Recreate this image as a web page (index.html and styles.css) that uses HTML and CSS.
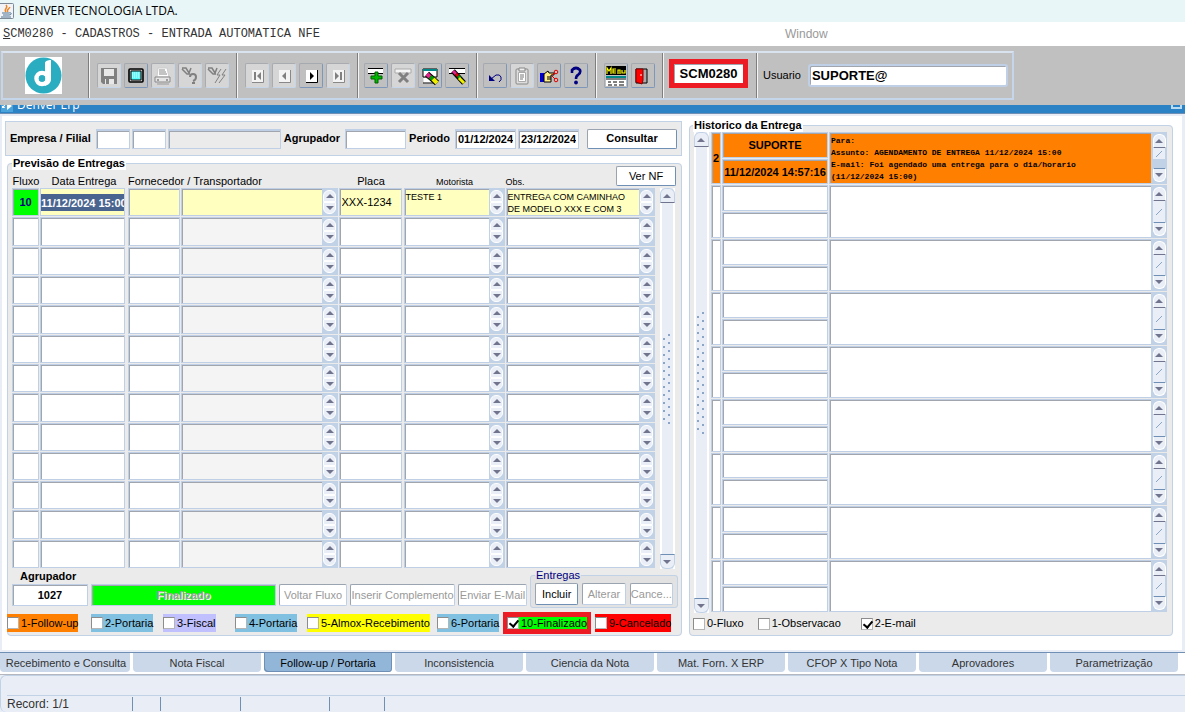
FILE: index.html
```
<!DOCTYPE html>
<html lang="pt-BR">
  <head>
    <meta charset="UTF-8" />
    <title>DENVER TECNOLOGIA LTDA.</title>
    <link rel="stylesheet" href="styles.css">
  </head>
  <body>
    <header class="titlebar">
      <svg class="java" width="14" height="16" viewBox="0 0 14 16">
        <rect x="-2" y="0.5" width="15.5" height="15" rx="1" fill="#f1f3f6" stroke="#7d8997" />
        <path d="M6 9C3 6 9 5 6 2M8 9C6 7 9 6 10 4" fill="none" stroke="#ee8322" stroke-width="1.4" />
        <path d="M2 10h7M3 12h6M1 14h10M9 10c3-1 3 2 0 2" fill="none" stroke="#4f7595" />
      </svg>
      <span>DENVER TECNOLOGIA LTDA.</span>
    </header>

    <nav class="menubar">
      <a href="#" class="menu-program"><u>S</u>CM0280 - CADASTROS - ENTRADA AUTOMATICA NFE</a>
      <a href="#" class="menu-window">Window</a>
    </nav>

    <div class="toolbar-area">
      <div class="toolbar">
        <div class="logo">
          <svg width="37" height="37" viewBox="0 0 37 37">
            <rect width="37" height="37" fill="#fff" />
            <circle cx="18.5" cy="18.5" r="18" fill="#2badc1" />
            <circle cx="17" cy="21.5" r="5.5" fill="none" stroke="#fff" stroke-width="4.5" />
            <path d="M20 6C20 4 23 3 26 3V22C26 26 23 28 20 29Z" fill="#fff" />
            <circle cx="17" cy="21.5" r="3.2" fill="#2badc1" />
          </svg>
        </div>

        <div class="group wide">
          <button class="tool off" aria-label="Salvar">
            <svg viewBox="0 0 20 20"><path d="M2 2h16v16H4l-2-2z" fill="#808080" /><path d="M5 3h10v7H5zM6 13h9v5H6z" fill="#e8e8e8" /><path d="M7 13h3v5H7z" fill="#808080" /></svg>
          </button>
          <button class="tool" aria-label="Tela">
            <svg viewBox="0 0 20 20"><rect x="3" y="3" width="14" height="13" rx="1" fill="#c0c0c0" stroke="#000" stroke-width="1.6" /><path d="M5 5h10v9H5z" fill="#5ff" stroke="#000" /><path d="M6 7h8M6 9h8M6 11h8" stroke="#fff" stroke-dasharray="1 1" /></svg>
          </button>
          <button class="tool off" aria-label="Imprimir">
            <svg viewBox="0 0 20 20"><path d="M5 2h9l2 9H4z" fill="#fff" stroke="#ccc" /><path d="M6 4h6M6 6h7M6 8h8" stroke="#888" /><path d="M2 11h15v5H2z" fill="#e6e6e6" stroke="#888" /><path d="M4 18h12" stroke="#999" /><path d="M4 14h2M13 14h2" stroke="#555" /></svg>
          </button>
          <button class="tool off" aria-label="Consultar ajuda">
            <svg viewBox="0 0 20 20"><path d="M2 2h4l3 5 2-5M2 3l5 5h3" fill="none" stroke="#808080" stroke-width="1.5" /><path d="M10 11q0-3 3-3t3 3-3 4M12 17h3" fill="none" stroke="#808080" stroke-width="2" /></svg>
          </button>
          <button class="tool off" aria-label="Executar">
            <svg viewBox="0 0 20 20"><path d="M1 2h4l3 5 2-5M1 3l5 5h3" fill="none" stroke="#808080" stroke-width="1.5" /><path d="M14 3l-4 6h3l-5 8M19 3l-4 6h3l-6 8" fill="none" stroke="#808080" /></svg>
          </button>
        </div>

        <div class="group wide">
          <button class="tool off" aria-label="Primeiro">
            <svg viewBox="0 0 20 20"><path d="M5 4h11v12H5z" fill="#f4f4f4" /><path d="M5 16.500h11.500V4" fill="none" stroke="#888" /><path d="M7 6h2v8H7zM14 6v8l-4-4z" fill="#808080" /></svg>
          </button>
          <button class="tool off" aria-label="Anterior">
            <svg viewBox="0 0 20 20"><path d="M5 4h11v12H5z" fill="#f4f4f4" /><path d="M5 16.500h11.500V4" fill="none" stroke="#888" /><path d="M12 6v8l-4-4z" fill="#808080" /></svg>
          </button>
          <button class="tool" aria-label="Proximo">
            <svg viewBox="0 0 20 20"><path d="M5 4h11v12H5z" fill="#fff" /><path d="M5 16.500h11.500V4" fill="none" stroke="#000" /><path d="M9 6v8l4-4z" fill="#000" /></svg>
          </button>
          <button class="tool off" aria-label="Ultimo">
            <svg viewBox="0 0 20 20"><path d="M5 4h11v12H5z" fill="#f4f4f4" /><path d="M5 16.500h11.500V4" fill="none" stroke="#888" /><path d="M12 6h2v8h-2zM7 6v8l4-4z" fill="#808080" /></svg>
          </button>
        </div>

        <div class="group">
          <button class="tool" aria-label="Inserir registro">
            <svg viewBox="0 0 20 20"><path d="M2 3h15v4H2z" fill="#fff" /><path d="M2 7.500h15M2 2.500h15" stroke="#000" /><path d="M9 6h3v4h4v3h-4v4H9v-4H5v-3h4z" fill="#00b800" stroke="#006000" /></svg>
          </button>
          <button class="tool off" aria-label="Remover registro">
            <svg viewBox="0 0 20 20"><path d="M2 3h16v4H2z" fill="#f4f4f4" stroke="#aaa" /><path d="M6 7l9 9M15 7l-9 9" stroke="#808080" stroke-width="3" /></svg>
          </button>
          <button class="tool" aria-label="Limpar formulario">
            <svg viewBox="0 0 20 20"><path d="M3 3h14v8H3z" fill="#fff" stroke="#000" /><path d="M3 4h14" stroke="#088" stroke-width="2" /><path d="M5 12v4h9" fill="#fff" stroke="#fff" stroke-width="3" /><path d="M3 17h12" stroke="#000" /><path d="M7 8l10 9" stroke="#000" stroke-width="6" /><path d="M7 8l3 3" stroke="#e0218a" stroke-width="4" /><path d="M10 11l3 2" stroke="#090" stroke-width="4" /><path d="M13 13l4 4" stroke="#ee0" stroke-width="4" /></svg>
          </button>
          <button class="tool" aria-label="Limpar registro">
            <svg viewBox="0 0 20 20"><path d="M2 3h16v4H2z" fill="#fff" /><path d="M2 2.500h16M2 7.500h16" stroke="#000" /><path d="M6 5l11 12" stroke="#000" stroke-width="5" /><path d="M6 5l3 3" stroke="#e0218a" stroke-width="3" /><path d="M9 8l2 2" stroke="#d00" stroke-width="3" /><path d="M11 10l2 2" stroke="#090" stroke-width="3" /><path d="M12 12l5 5" stroke="#ee0" stroke-width="3" /></svg>
          </button>
        </div>

        <div class="group">
          <button class="tool" aria-label="Desfazer">
            <svg viewBox="0 0 20 20"><path d="M6 13l5-4q4-1 5 2t-2 5" fill="none" stroke="#000080" /><path d="M4 9v6h6z" fill="#000080" /></svg>
          </button>
          <button class="tool off" aria-label="Colar">
            <svg viewBox="0 0 20 20"><rect x="4" y="3" width="12" height="15" rx="1" fill="#ddd" stroke="#888" /><path d="M7 2h6v3H7z" fill="#eee" stroke="#888" /><path d="M6.500 6.500h7v9h-7z" fill="#fff" stroke="#aaa" /><path d="M8 9h4M8 11h4M8 13h3" stroke="#777" /></svg>
          </button>
          <button class="tool" aria-label="Recortar">
            <svg viewBox="0 0 20 20"><path d="M1 7h4v9H1z" fill="#0000d0" /><path d="M5 8l4-3 1 2h5v2h-3v7H5z" fill="#fe8" stroke="#000" /><path d="M8 11h4M8 13h4" stroke="#000" /><path d="M13 9l3-2M13 10l3 3" stroke="#d00" /><circle cx="17" cy="6" r="1.800" fill="none" stroke="#d00" /><circle cx="17" cy="14" r="1.800" fill="none" stroke="#d00" /></svg>
          </button>
          <button class="tool" aria-label="Ajuda">
            <svg viewBox="0 0 20 20"><path d="M6 7V4q4-4 8 0 1 3-2 5-2 1-2 4" fill="none" stroke="#000080" stroke-width="2.600" /><circle cx="10" cy="16.500" r="1.900" fill="#000080" /></svg>
          </button>
        </div>

        <div class="group wide">
          <button class="tool" aria-label="Menu">
            <svg viewBox="0 0 20 20"><path d="M0 0h20v9H0z" fill="#000" /><path d="M1 8V2l2 3 2-3v6M10 3H7v4h3M7 5h3M12 8V4h2v4M16 4v3h3V4" fill="none" stroke="#ff0" stroke-width="1.200" /><path d="M0 10h20v10H0z" fill="#fff" /><path d="M0 11h20" stroke="#088" stroke-width="2" /><path d="M0 13h20M2 16h3M7 16h4M13 16h5M2 19h4M8 19h3M13 19h5" stroke="#000" /></svg>
          </button>
          <button class="tool" aria-label="Sair">
            <svg viewBox="0 0 20 20"><path d="M3 3h11v14H3z" fill="#aaa" stroke="#000" /><path d="M3 3h7v11l-1 4-6-2z" fill="#f00" stroke="#800" /><path d="M7 9h2" stroke="#fff" /></svg>
          </button>
        </div>

        <div class="group program">
          <input class="code" type="text" value="SCM0280" aria-label="Programa" />
        </div>
        <div class="group user">
          <label for="usuario">Usuario</label>
          <input id="usuario" type="text" value="SUPORTE@" />
        </div>
      </div>
    </div>

    <div class="window-bar">
      <svg width="12" height="12" viewBox="0 0 12 12"><path d="M0 0h12v12H0z" fill="#4ba3dc" /><path d="M6 2v8l5-4zM2 4h2v2H1v2h3" fill="#fff" /></svg>
      <span>Denver Erp</span>
      <button class="restore" aria-label="Restaurar"></button>
    </div>

    <main class="desktop">
      <section class="left">
        <form class="filter">
          <label for="empresa">Empresa / Filial</label>
          <input id="empresa" class="w-code" type="text" />
          <input class="w-code" type="text" aria-label="Filial" />
          <input class="w-name" type="text" aria-label="Nome da filial" readonly />
          <label for="agrupador">Agrupador</label>
          <input id="agrupador" class="w-date" type="text" />
          <label for="periodo">Periodo</label>
          <input id="periodo" class="w-date" type="text" value="01/12/2024" />
          <input class="w-date" type="text" value="23/12/2024" aria-label="Periodo final" />
          <button type="button" class="btn strong">Consultar</button>
        </form>

        <fieldset class="panel">
          <legend>Previsão de Entregas</legend>
          <button type="button" class="btn ver-nf">Ver NF</button>
          <div class="grid-area">
            <table class="entregas">
              <thead>
                <tr>
                  <th>Fluxo</th>
                  <th>Data Entrega</th>
                  <th class="start" colspan="2">Fornecedor / Transportador</th>
                  <th>Placa</th>
                  <th class="small">Motorista</th>
                  <th class="small start">Obs.</th>
                </tr>
              </thead>
              <tbody id="entregas"></tbody>
            </table>
            <div class="scroll">
              <button type="button" class="arrow up" aria-label="Subir"></button>
              <div class="grip"></div>
              <button type="button" class="arrow down" aria-label="Descer"></button>
            </div>
          </div>

          <div class="actions">
            <div class="agrupador">
              <label for="agrupadorAtual">Agrupador</label>
              <input id="agrupadorAtual" type="text" value="1027" />
            </div>
            <input class="situacao" type="text" value="Finalizado" aria-label="Situacao" disabled />
            <button type="button" class="btn voltar" disabled>Voltar Fluxo</button>
            <button type="button" class="btn inserir" disabled>Inserir Complemento</button>
            <button type="button" class="btn enviar" disabled>Enviar E-Mail</button>
            <fieldset class="entregas-box">
              <legend>Entregas</legend>
              <button type="button" class="btn">Incluir</button>
              <button type="button" class="btn" disabled>Alterar</button>
              <button type="button" class="btn" disabled>Cance...</button>
            </fieldset>
          </div>

          <div class="flags">
            <label class="flag orange"><input type="checkbox" />1-Follow-up</label>
            <label class="flag blue"><input type="checkbox" />2-Portaria</label>
            <label class="flag lilac"><input type="checkbox" />3-Fiscal</label>
            <label class="flag blue"><input type="checkbox" />4-Portaria</label>
            <label class="flag yellow"><input type="checkbox" />5-Almox-Recebimento</label>
            <label class="flag blue"><input type="checkbox" />6-Portaria</label>
            <label class="flag green"><input type="checkbox" checked />10-Finalizado</label>
            <label class="flag red"><input type="checkbox" />9-Cancelado</label>
          </div>
        </fieldset>
      </section>

      <section class="right">
        <fieldset class="panel">
          <legend>Historico da Entrega</legend>
          <div class="grid-area">
            <div class="scroll">
              <button type="button" class="arrow up" aria-label="Subir"></button>
              <div class="grip long"></div>
              <button type="button" class="arrow down" aria-label="Descer"></button>
            </div>
            <table class="historico">
              <tbody id="historico"></tbody>
            </table>
          </div>
          <div class="tipos">
            <label><input type="checkbox" />0-Fluxo</label>
            <label><input type="checkbox" />1-Observacao</label>
            <label><input type="checkbox" checked />2-E-mail</label>
          </div>
        </fieldset>
      </section>
    </main>

    <nav class="tabs">
      <a href="#">Recebimento e Consulta</a>
      <a href="#">Nota Fiscal</a>
      <a href="#" class="active">Follow-up / Portaria</a>
      <a href="#">Inconsistencia</a>
      <a href="#">Ciencia da Nota</a>
      <a href="#">Mat. Forn. X ERP</a>
      <a href="#">CFOP X Tipo Nota</a>
      <a href="#">Aprovadores</a>
      <a href="#">Parametrização</a>
    </nav>

    <footer class="status">
      <div class="status-line">
        <span class="record">Record: 1/1</span>
        <span class="s1"></span>
        <span class="s2"></span>
        <span class="s3"></span>
        <span class="s4"></span>
        <span class="s5"></span>
      </div>
    </footer>

    <script>
      const entregaRows = 13
      const historicoRows = 9

      const entregas = [
        {
          fluxo: '10',
          data: '11/12/2024 15:00',
          placa: 'XXX-1234',
          motorista: 'TESTE 1',
          obs: 'ENTREGA COM CAMINHAO\nDE MODELO XXX E COM 3',
        },
      ]

      const historico = [
        {
          tipo: '2',
          usuario: 'SUPORTE',
          data: '11/12/2024 14:57:16',
          texto:
            'Para:\nAssunto: AGENDAMENTO DE ENTREGA 11/12/2024 15:00\nE-mail: Foi agendado uma entrega para o dia/horario\n(11/12/2024 15:00)',
        },
      ]

      const arrows = (middle) => `
        <span class="spin">
          <button type="button" class="arrow up" aria-label="Subir"></button>${middle}
          <button type="button" class="arrow down" aria-label="Descer"></button>
        </span>`

      function field(name, value = '') {
        return `<td class="${name}"><input type="text" value="${value}" aria-label="${name}" /></td>`
      }

      function area(name, value = '', middle = '') {
        return `<td class="${name} area"><textarea aria-label="${name}">${value}</textarea>${arrows(middle)}</td>`
      }

      const entregasBody = document.getElementById('entregas')
      for (let i = 0; i < entregaRows; i++) {
        const e = entregas[i] || {}
        const tr = document.createElement('tr')
        if (entregas[i]) tr.className = 'current'
        tr.innerHTML =
          field('fluxo', e.fluxo) +
          field('data', e.data) +
          field('fornecedor') +
          area('transportador') +
          field('placa', e.placa) +
          area('motorista', e.motorista) +
          area('obs', e.obs)
        entregasBody.appendChild(tr)
      }

      const historicoBody = document.getElementById('historico')
      for (let i = 0; i < historicoRows; i++) {
        const h = historico[i] || {}
        const tr = document.createElement('tr')
        if (historico[i]) tr.className = 'current'
        tr.innerHTML =
          field('tipo', h.tipo) +
          field('autor', h.usuario) +
          field('quando', h.data) +
          area('texto', h.texto, '<i class="thumb"></i>')
        historicoBody.appendChild(tr)
      }
    </script>
  </body>
</html>
```
FILE: styles.css
```
* {
  box-sizing: border-box;
}

body {
  margin: 0;
  min-height: 100vh;
  display: flex;
  flex-direction: column;
  font-family: "Liberation Sans", Arial, sans-serif;
  font-size: 11px;
  line-height: 13px;
  color: #000;
  background: #e9eef6;
}

input,
textarea,
button {
  font: inherit;
  color: inherit;
  margin: 0;
  min-width: 0;
  border-radius: 0;
}

input,
textarea {
  background: #fff;
  border: 1px solid #bfd0e6;
  box-shadow: inset 1px 1px 0 #a0a5ae;
  padding: 0 2px;
  outline: none;
}

a {
  color: inherit;
  text-decoration: none;
}

fieldset {
  min-width: 0;
  margin: 0;
}

/* title and menu */

.titlebar {
  height: 22px;
  display: flex;
  align-items: center;
  gap: 5px;
  background: #e9f6f8;
  font: 12px/16px "Open Sans", sans-serif;
}

.menubar {
  height: 24px;
  display: flex;
  align-items: center;
  background: #fff;
}

.menu-program {
  width: 785px;
  padding-left: 3px;
  font: 12px/16px "Liberation Mono", monospace;
  color: #333;
}

.menu-window {
  font-size: 12px;
  color: #999;
}

/* toolbar */

.toolbar-area {
  background: #c0c0c0;
  padding: 5px 1px;
}

.toolbar {
  width: fit-content;
  height: 49px;
  display: flex;
  border: 2px solid #c5d5ea;
  border-top-color: #d9e3f0;
}

.logo {
  width: 85px;
  padding: 4px 0 0 22px;
}

.group {
  display: flex;
  align-items: center;
  gap: 3px;
  padding: 0 7px 0 6px;
  border-left: 1px solid #7e7e7e;
  box-shadow: inset 1px 0 0 #f5f5f5;
}

.wide {
  padding: 0 7px 0 8px;
}

.tool {
  width: 24px;
  height: 25px;
  padding: 1px;
  background: #c0c0c0;
  border: 1px solid #a5a9b0;
  border-right-color: #7c97ba;
  border-bottom-color: #7c97ba;
  border-radius: 2px;
}

.tool.off {
  background: #d6d6d6;
  border-color: #a8abb0 #c5d5ea #c5d5ea #a8abb0;
}

.tool svg {
  display: block;
  width: 20px;
  height: 20px;
}

.program {
  padding: 0 8px 4px 6px;
}

.code {
  width: 79px;
  height: 29px;
  border: 5px solid #ed1c24;
  text-align: center;
  font-size: 13px;
  font-weight: bold;
}

.user {
  gap: 7px;
  padding-right: 4px;
}

.user input {
  width: 200px;
  height: 23px;
  border-width: 2px;
  border-radius: 3px;
  font-size: 13px;
  font-weight: bold;
}

.window-bar {
  height: 9px;
  display: flex;
  align-items: flex-end;
  gap: 4px;
  padding-left: 1px;
  overflow: hidden;
  background: #2b83c5;
  color: #fff;
  font: 12px/14px "Open Sans", sans-serif;
}

.window-bar svg {
  margin-bottom: 2px;
}

.window-bar span {
  padding-bottom: 2px;
}

.restore {
  width: 11px;
  height: 11px;
  margin: 0 3px 5px auto;
  padding: 0;
  background: #2b83c5;
  border: 2px solid #b9dcf3;
}

/* main area */

.desktop {
  flex: 1;
  display: flex;
  gap: 7px;
  padding: 5px 9px 14px 3px;
  background: #fff;
  border: solid #e9eef6;
  border-width: 2px 3px 2px 2px;
  outline: 1px solid #6f8fb5;
}

.left {
  flex: 677;
  min-width: 0;
  display: flex;
  flex-direction: column;
}

.right {
  flex: 484;
  min-width: 0;
  display: flex;
  flex-direction: column;
  margin-top: -2px;
}

.filter {
  height: 35px;
  display: flex;
  align-items: center;
  gap: 2px;
  padding: 0 4px 0 3px;
  background: #ebebeb;
  border: 1px solid #c2d2e6;
  font-weight: bold;
}

.filter label {
  padding: 0 3px 0 1px;
}

.filter input {
  height: 20px;
  border-width: 2px 1px 1px;
}

.filter input[readonly] {
  background: #ebebeb;
}

.filter .w-code {
  width: 34px;
}

.filter .w-name {
  flex: 1;
}

.filter .w-date {
  width: 61px;
}

.filter .btn {
  width: 90px;
  margin-left: 6px;
}

.btn {
  height: 20px;
  padding: 0;
  background: #fff;
  border: 1px solid #9aa3b0;
  border-right-color: #6f8fb5;
  border-bottom-color: #6f8fb5;
  border-radius: 2px;
  white-space: nowrap;
}

.btn.strong {
  font-weight: bold;
}

.btn:disabled {
  color: #999;
  border-right-color: #bfd0e6;
  border-bottom-color: #bfd0e6;
}

.panel {
  flex: 1;
  position: relative;
  display: flex;
  flex-direction: column;
  padding: 0 6px 1px 4px;
  background: #ebebeb;
  border: 1px solid #c2d2e6;
  border-radius: 4px;
}

.left .panel {
  margin: 1px 0 0 2px;
}

.panel > legend {
  padding: 0 1px;
  margin-bottom: 0;
  background: #fff;
  font-weight: bold;
}

.ver-nf {
  position: absolute;
  top: -4px;
  right: 5px;
  width: 60px;
}

.grid-area {
  flex: 1;
  display: flex;
  gap: 3px;
}

/* data tables */

table {
  flex: 1;
  min-width: 0;
  display: flex;
  flex-direction: column;
}

tbody {
  flex: 1;
  display: flex;
  flex-direction: column;
}

tr {
  display: grid;
}

.entregas tr {
  grid-template-columns: 28px 88px 53px minmax(0, 157fr) 65px 102px minmax(0, 150fr);
}

tbody tr {
  flex: 1 0 26px;
  min-height: 0;
}

th {
  padding: 0;
  font-weight: normal;
  align-self: end;
  line-height: 14px;
  white-space: nowrap;
}

thead tr {
  height: 18px;
}

th[colspan] {
  grid-column: span 2;
}

th.start {
  text-align: left;
}

th.small {
  font-size: 9px;
  line-height: 12px;
}

td {
  display: flex;
  min-width: 0;
  min-height: 0;
  padding: 0 1px 1px 0;
}

td input,
td textarea {
  flex: 1;
  width: 100%;
  height: 100%;
}

td.placa {
  padding-right: 2px;
}

td.data {
  padding-right: 3px;
}

td textarea {
  display: block;
  resize: none;
  overflow: hidden;
  border-right: 0;
  font-size: 9px;
  line-height: 12px;
}

.entregas textarea {
  padding: 2px 1px;
}

.transportador textarea {
  background: #f4f4f4;
}

.fluxo input {
  padding: 0;
  text-align: center;
}

.entregas .current input,
.entregas .current textarea {
  background: #ffffc0;
}

.entregas .current .fluxo input {
  background: #0f0;
  color: #000080;
  font-weight: bold;
}

.current .data input {
  padding: 0;
  border-width: 6px 1px 5px;
  border-color: #ffffc0;
  outline: 1px solid #bfd0e6;
  outline-offset: -1px;
  box-shadow: none;
  color: #fff;
  font-weight: bold;
}

.entregas .current .data input {
  background: #49648f;
}

.spin {
  flex: none;
  width: 16px;
  display: flex;
  flex-direction: column;
  align-items: center;
  justify-content: center;
  background: #c2d2e6;
}

.spin .arrow {
  width: 13px;
  height: 12px;
}

.arrow {
  flex: none;
  display: grid;
  place-items: center;
  padding: 0;
  background: #eaeff7;
  border: 1px solid #fff;
}

.arrow.up {
  border-radius: 6px 6px 0 0;
}

.arrow.down {
  border-radius: 0 0 6px 6px;
}

.arrow::before {
  content: "";
  border: solid transparent;
  border-width: 0 4px;
}

.arrow.up::before {
  border-bottom: 4px solid #70748c;
}

.arrow.down::before {
  border-top: 4px solid #70748c;
}

.scroll {
  flex: none;
  width: 16px;
  display: flex;
  flex-direction: column;
  align-items: center;
  justify-content: space-between;
  background: linear-gradient(90deg, #ebebeb 1px, #fff 1px 3px, #e9eef6 3px 14px, #fff 14px);
}

.left .scroll {
  margin-top: 18px;
}

.scroll .arrow {
  width: 15px;
  height: 15px;
  border-color: #c2d2e6;
}

.scroll .arrow.up {
  border-bottom-color: #70748c;
}

.scroll .arrow.down {
  border-top-color: #6f8fb5;
}

.grip {
  width: 8px;
  height: 92px;
  background:
    linear-gradient(135deg, transparent 40%, #fff 40% 50%, #8aa5c8 50% 65%, transparent 65%) 4px 0 / 8px 8px,
    linear-gradient(135deg, transparent 40%, #fff 40% 50%, #8aa5c8 50% 65%, transparent 65%) 0 4px / 8px 8px;
  background:
    radial-gradient(circle at 6px 2px, #8aa5c8 1px, transparent 1px) 0 0 / 8px 8px,
    radial-gradient(circle at 1px 6px, #8aa5c8 1px, transparent 1px) 0 0 / 8px 8px;
}

.grip.long {
  height: 124px;
}

/* history */

.right .grid-area {
  gap: 2px;
}

.historico tr {
  grid-template-columns: 11px 107px minmax(0, 1fr);
  grid-template-rows: 1fr 1fr;
}

.historico td.tipo,
.historico td.texto {
  grid-row: span 2;
}

.historico td.texto {
  grid-column: 3;
  grid-row: 1 / 3;
}

.historico td.quando {
  grid-column: 2;
  grid-row: 2;
}

.historico input {
  padding: 0;
  text-align: center;
}

.historico .current input,
.historico .current textarea {
  background: #ff8000;
  font-weight: bold;
}

.historico textarea {
  padding: 2px 1px;
  font: 8px/12px "Liberation Mono", monospace;
}

.historico .spin {
  padding: 2px 0;
  justify-content: space-between;
}

.historico .arrow {
  height: 14px;
}

.historico .arrow.up {
  border-bottom-color: #70748c;
}

.historico .arrow.down {
  border-top-color: #6f8fb5;
}

.thumb {
  flex: 1;
  width: 12px;
  background:
    linear-gradient(135deg, transparent 46%, #8aa5c8 46% 54%, transparent 54%) center / 6px 6px no-repeat,
    #eaeff7;
}

.current .thumb {
  flex: none;
  height: 11px;
  margin-bottom: 9px;
}

/* actions below the grid */

.actions {
  display: flex;
  align-items: flex-end;
  gap: 3px;
  margin-right: -3px;
  padding-bottom: 2px;
}

.actions input,
.actions .btn {
  height: 22px;
}

.agrupador {
  width: 76px;
  display: flex;
  flex-direction: column;
  font-weight: bold;
}

.agrupador label {
  padding: 1px 0 1px 8px;
}

.agrupador input {
  text-align: center;
}

.actions .situacao {
  flex: 1;
  background: #0f0;
  color: #a0a0a0;
  font-weight: bold;
  text-align: center;
  text-shadow: 1px 1px 0 #fff;
}

.voltar {
  width: 68px;
}

.inserir {
  width: 105px;
}

.enviar {
  width: 69px;
}

.entregas-box {
  width: 148px;
  display: flex;
  gap: 4px;
  margin-bottom: -2px;
  padding: 1px 4px 2px;
  background: #e2e2e2;
  border: 1px solid #c2d2e6;
  border-radius: 3px;
}

.entregas-box legend {
  padding: 0 1px;
  color: #000080;
}

.entregas-box .btn {
  flex: 1;
}

.flags {
  height: 22px;
  display: grid;
  grid-template-columns: 84px 72px 72px 72px 130px 66px 92px 1fr;
  align-items: center;
  justify-items: start;
  margin: 4px 0 0 -5px;
}

.flag {
  height: 18px;
  display: flex;
  align-items: center;
  gap: 2px;
  white-space: nowrap;
}

.orange {
  background: #ff8000;
}

.blue {
  background: #80c0e0;
}

.lilac {
  background: #c0c0ff;
}

.yellow {
  background: #ff0;
}

.green {
  height: 22px;
  background: #0f0;
  border: solid #ed1c24;
  border-width: 5px 4px;
}

.red {
  background: #f00;
}

input[type="checkbox"] {
  appearance: none;
  flex: none;
  width: 12px;
  height: 12px;
  padding: 0;
  background: #fff;
  border: 1px solid #b5b5b5;
  border-top-color: #8c8c8c;
  border-left-color: #8c8c8c;
  box-shadow: none;
}

input[type="checkbox"]:checked::before {
  content: "";
  display: block;
  width: 4px;
  height: 7px;
  margin: 0 0 0 3px;
  border: solid #000;
  border-width: 0 2px 2px 0;
  transform: rotate(40deg);
}

.right .panel {
  padding: 0 4px 5px 3px;
}

.tipos {
  display: flex;
  gap: 14px;
  padding-top: 4px;
}

.tipos label {
  display: flex;
  align-items: center;
  gap: 2px;
}

.tipos label:last-child {
  margin-left: 6px;
}

/* bottom tabs and status */

.tabs {
  height: 23px;
  display: flex;
  gap: 3px;
  padding: 0 7px 2px 0;
  background: #fff;
  border-top: 1px solid #6f8fb5;
  border-bottom: 1px solid #b4b8be;
}

.tabs a {
  flex: 1;
  text-align: center;
  line-height: 20px;
  color: #333;
  background: #cad8ea;
  border-radius: 0 0 4px 4px;
  white-space: nowrap;
}

.tabs a:first-child {
  padding-left: 2px;
}

.tabs .active {
  color: #000;
  background: #92b6d8;
  box-shadow: inset 1px -1px 0 #6f8fb5, inset -1px 0 0 #6f8fb5;
}

.status {
  height: 37px;
  padding: 19px 0 0 6px;
  border: 1px solid #c2d2e6;
  border-width: 1px 0 0 1px;
  border-radius: 6px 0 0 6px;
}

.status-line {
  display: flex;
  align-items: center;
  border-top: 1px solid #c2d2e6;
  font-size: 12px;
  line-height: 16px;
  color: #333;
}

.record {
  width: 125px;
}

.status-line span:not(.record) {
  height: 14px;
  border-left: 1px solid #6f8fb5;
}

.s1 {
  width: 28px;
}

.s2 {
  width: 80px;
}

.s3 {
  width: 89px;
}

.s4 {
  width: 55px;
}
```
